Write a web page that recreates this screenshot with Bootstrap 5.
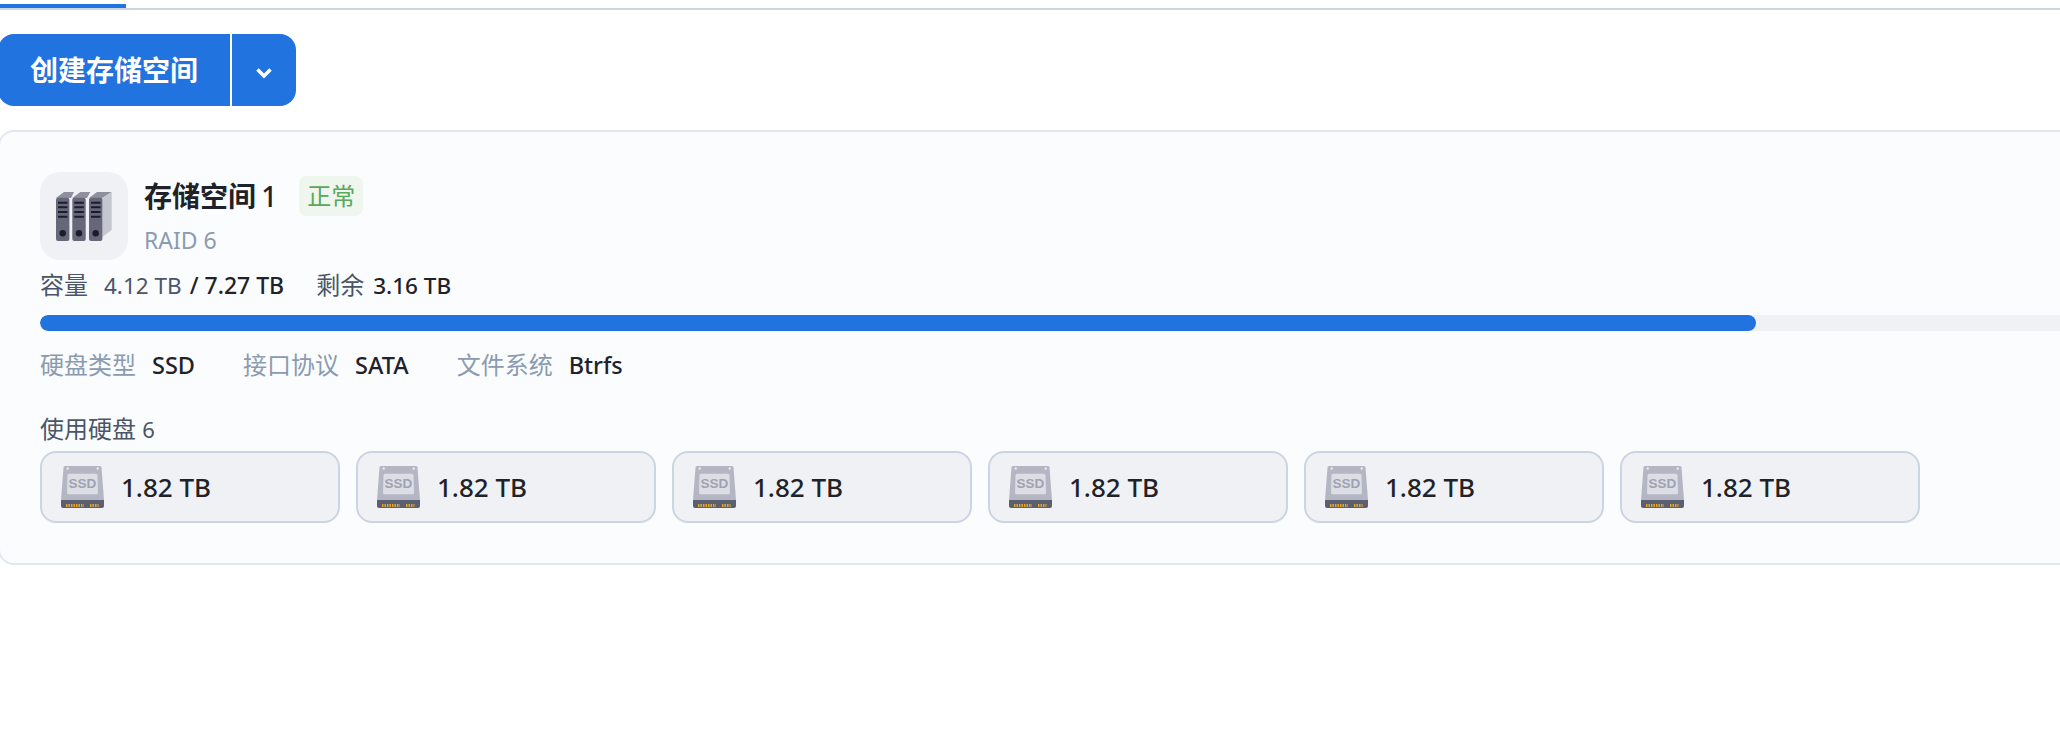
<!DOCTYPE html>
<html lang="zh-CN">
<head>
    <meta charset="UTF-8">
    <meta name="viewport" content="width=device-width, initial-scale=1.0">
    <title>存储空间</title>
    <link href="https://cdn.jsdelivr.net/npm/bootstrap@5.3.0/dist/css/bootstrap.min.css" rel="stylesheet">
    <style>
        body { background: #fff; overflow: hidden; color: #1f2329; font-family: "Noto Sans", "Noto Sans CJK SC", sans-serif; font-size: 24px; }
        .tab-strip { height: 10px; padding-top: 4px; border-bottom: 2px solid #cbd5e1; }
        .tab-active { width: 126px; height: 4px; background: #2173e0; }
        .page-body { width: 3112px; margin-left: -2px; padding-top: 24px; }
        .create-group { margin-bottom: 24px; }
        .create-group .btn { background: #2173e0; border: 0; color: #fff; height: 72px; font-size: 28px; font-weight: 700; line-height: 72px; padding: 0; }
        .create-main { width: 232px; border-radius: 16px 0 0 16px !important; }
        .create-more { width: 64px; margin-left: 2px !important; border-radius: 0 16px 16px 0 !important; }
        .pool-card { background: #fbfcfe; border: 2px solid #e2e8f0; border-radius: 16px; padding: 40px; height: 435px; }
        .pool-icon { width: 88px; height: 88px; background: #f0f1f5; border-radius: 20px; }
        .pool-name { font-size: 28px; font-weight: 700; line-height: 40px; word-spacing: -2px; }
        .pool-num { font-weight: 500; }
        .pool-state { background: #eef6ee; color: #5aa85a; border-radius: 8px; height: 40px; width: 64px; line-height: 40px; text-align: center; margin-left: 22px; }
        .pool-raid { color: #8a9bb0; font-size: 23px; line-height: 32px; margin-top: 8px; }
        .usage-line { height: 36px; line-height: 36px; margin-top: 7px; color: #4a5568; }
        .usage-line span { font-size: 22.500px; }
        .usage-line b { font-size: 23px; font-weight: 500; color: #1f2329; }
        .usage-used { margin-left: 16px; }
        .usage-total { margin-left: 8px; }
        .usage-left { margin-left: 32px; font-size: 24px !important; }
        .usage-free { margin-left: 9px; font-size: 22.500px !important; }
        .pool-bar { height: 16px; margin-top: 12px; background: #f0f1f4; border-radius: 8px; }
        .pool-bar .progress-bar { background: #2173e0; border-radius: 8px; }
        .spec-line { height: 36px; line-height: 36px; margin-top: 16px; color: #8a9bb0; gap: 48px; }
        .spec-line b { color: #1f2329; font-weight: 500; font-size: 23.500px; margin-left: 16px; }
        .disk-title { color: #4a5568; line-height: 36px; margin-top: 28px; }
        .disk-title span { font-size: 22px; }
        .disk-list { gap: 16px; margin-top: 4px; }
        .disk-chip { width: 300px; height: 72px; background: #f0f1f5; border: 2px solid #cbd5e1; border-radius: 16px; padding-left: 19px; gap: 17px; font-size: 26px; font-weight: 500; }
    </style>
</head>
<body>
    <div class="tab-strip">
        <div class="tab-active"></div>
    </div>

    <div class="page-body">
        <div class="btn-group create-group">
            <button type="button" class="btn btn-primary create-main">创建存储空间</button>
            <button type="button" class="btn btn-primary create-more">
                <svg width="16" height="12" viewBox="0 0 16 12"><path d="M1.500 2.500L8 9l6.500-6.500" fill="none" stroke="#fff" stroke-width="3.500"/></svg>
            </button>
        </div>

        <div class="pool-card">
            <div class="d-flex">
                <div class="pool-icon d-flex align-items-center justify-content-center">
                    <svg width="56" height="50" viewBox="0 0 56 50">
                        <path d="M0 7l8-6h10L15 7zM16.300 7l8-6h10L31 7zM33 7l8-6h14.700l-9.400 6z" fill="#8e90a0"/>
                        <path d="M46.300 7l9.400-6v38l-9.400 7z" fill="#c4c6d0"/>
                        <rect x="0" y="6.700" width="13.400" height="43.300" rx="2" fill="#666879"/>
                        <rect x="16.300" y="6.700" width="13.400" height="43.300" rx="2" fill="#666879"/>
                        <rect x="33" y="6.700" width="13.400" height="43.300" rx="2" fill="#666879"/>
                        <path d="M2 11.700h9.500M2 16.300h9.500M2 21h9.500M2 25.700h9.500M18.300 11.700h9.500M18.300 16.300h9.500M18.300 21h9.500M18.300 25.700h9.500M35 11.700h9.500M35 16.300h9.500M35 21h9.500M35 25.700h9.500" stroke="#1a1c2c" stroke-width="2"/>
                        <circle cx="6.700" cy="42.300" r="3.200" fill="#1a1c2c"/>
                        <circle cx="23" cy="42.300" r="3.200" fill="#1a1c2c"/>
                        <circle cx="39.700" cy="42.300" r="3.200" fill="#1a1c2c"/>
                    </svg>
                </div>
                <div class="ms-3">
                    <div class="d-flex align-items-center mt-1">
                        <span class="pool-name">存储空间 <span class="pool-num">1</span></span>
                        <span class="pool-state">正常</span>
                    </div>
                    <div class="pool-raid">RAID 6</div>
                </div>
            </div>

            <div class="usage-line">容量<span class="usage-used">4.12 TB</span><b class="usage-total">/ 7.27 TB</b><span class="usage-left">剩余</span><b class="usage-free">3.16 TB</b></div>

            <div class="progress pool-bar">
                <div class="progress-bar" style="width: 56.67%"></div>
            </div>

            <div class="spec-line d-flex">
                <div>硬盘类型<b>SSD</b></div>
                <div>接口协议<b>SATA</b></div>
                <div>文件系统<b>Btrfs</b></div>
            </div>

            <div class="disk-title">使用硬盘 <span>6</span></div>
            <div class="disk-list d-flex" id="diskList"></div>
        </div>
    </div>

    <script>
        // Six identical disks in the pool
        const diskList = document.getElementById('diskList');
        for (let i = 0; i < 6; i++) {
            const chip = document.createElement('div');
            chip.className = 'disk-chip d-flex align-items-center';
            chip.innerHTML = `
                <svg width="43" height="42" viewBox="0 0 43 42">
                    <path d="M4 0h35a1.500 1.500 0 0 1 1.500 1.500L43 34H0L2.500 1.500A1.500 1.500 0 0 1 4 0z" fill="#b4b6c4"/>
                    <path d="M0 34h43v6a2 2 0 0 1-2 2H2a2 2 0 0 1-2-2z" fill="#5c5f70"/>
                    <path d="M8 7.700h27a1.500 1.500 0 0 1 1.500 1.500l.5 17.600a1.500 1.500 0 0 1-1.500 1.500H7.500a1.500 1.500 0 0 1-1.500-1.500l.5-17.600a1.500 1.500 0 0 1 1.500-1.500z" fill="#dcdde5"/>
                    <circle cx="6.700" cy="2.500" r="1.200" fill="#e8e9ef"/>
                    <circle cx="36.700" cy="2.500" r="1.200" fill="#e8e9ef"/>
                    <text x="21.500" y="22" text-anchor="middle" font-family="Liberation Sans, sans-serif" font-size="13.500" font-weight="700" fill="#a0a2b2">SSD</text>
                    <path d="M5 39.500h18M29 39.500h8.500" stroke="#e0a92c" stroke-width="3" stroke-dasharray="1.500 1"/>
                </svg>
                <span>1.82 TB</span>`;
            diskList.appendChild(chip);
        }
    </script>
</body>
</html>
